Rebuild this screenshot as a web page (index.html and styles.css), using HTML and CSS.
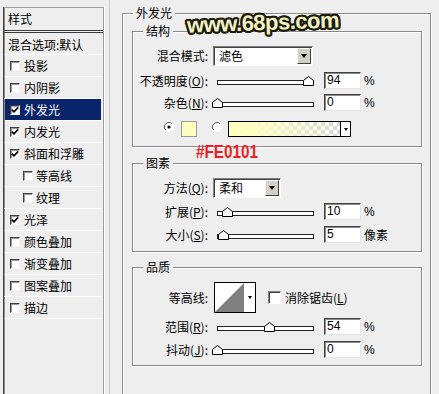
FILE: index.html
```html
<!DOCTYPE html>
<html lang="zh-CN">
<head>
<meta charset="utf-8">
<title>外发光</title>
<link rel="stylesheet" href="styles.css">
</head>
<body>
<div class="side">
  <div class="list">
    <div class="list-head">样式</div>
    <div class="list-blend">混合选项:默认</div>
    <div class="item"><span class="cb"></span><span>投影</span></div>
    <div class="item"><span class="cb"></span><span>内阴影</span></div>
    <div class="item sel"><span class="cb"><svg class="chk" viewBox="0 0 8 8" width="8" height="8"><path d="M0.8 3.6 L3 5.8 L7.2 1.4" fill="none" stroke="#000" stroke-width="1.7"/></svg></span><span>外发光</span></div>
    <div class="item"><span class="cb"><svg class="chk" viewBox="0 0 8 8" width="8" height="8"><path d="M0.8 3.6 L3 5.8 L7.2 1.4" fill="none" stroke="#000" stroke-width="1.7"/></svg></span><span>内发光</span></div>
    <div class="item"><span class="cb"><svg class="chk" viewBox="0 0 8 8" width="8" height="8"><path d="M0.8 3.6 L3 5.8 L7.2 1.4" fill="none" stroke="#000" stroke-width="1.7"/></svg></span><span>斜面和浮雕</span></div>
    <div class="item sub"><span class="cb"></span><span>等高线</span></div>
    <div class="item sub"><span class="cb"></span><span>纹理</span></div>
    <div class="item"><span class="cb"><svg class="chk" viewBox="0 0 8 8" width="8" height="8"><path d="M0.8 3.6 L3 5.8 L7.2 1.4" fill="none" stroke="#000" stroke-width="1.7"/></svg></span><span>光泽</span></div>
    <div class="item"><span class="cb"></span><span>颜色叠加</span></div>
    <div class="item"><span class="cb"></span><span>渐变叠加</span></div>
    <div class="item"><span class="cb"></span><span>图案叠加</span></div>
    <div class="item"><span class="cb"></span><span>描边</span></div>
  </div>
</div>

<div class="main">
  <fieldset class="group outer">
    <legend>外发光</legend>

    <fieldset class="group box box1">
      <legend>结构</legend>
      <div class="row r-select">
        <span class="lbl">混合模式:</span>
        <div class="select w100"><span>滤色</span><span class="sel-btn"><span class="tri"></span></span></div>
      </div>
      <div class="row r-num mt6">
        <span class="lbl">不透明度(<u>O</u>):</span>
        <div class="slider"><div class="track"></div><svg class="thumb" style="left:94%" viewBox="0 0 11 10" width="11" height="10"><path d="M0.5 9.5 V4.5 L5.5 0.5 L10.5 4.5 V9.5 Z" fill="#fff" stroke="#000"/></svg></div>
        <span class="num">94</span><span class="unit">%</span>
      </div>
      <div class="row r-num mt5">
        <span class="lbl">杂色(<u>N</u>):</span>
        <div class="slider"><div class="track"></div><svg class="thumb" style="left:0%" viewBox="0 0 11 10" width="11" height="10"><path d="M0.5 9.5 V4.5 L5.5 0.5 L10.5 4.5 V9.5 Z" fill="#fff" stroke="#000"/></svg></div>
        <span class="num">0</span><span class="unit">%</span>
      </div>
      <div class="row r-color mt10">
        <svg class="radio" viewBox="0 0 10 10" width="10" height="10"><circle cx="5" cy="5" r="4.5" fill="#fff"/><path d="M1.8 8.2 A4.5 4.5 0 0 1 8.2 1.8" fill="none" stroke="#555"/><path d="M8.2 1.8 A4.5 4.5 0 0 1 1.8 8.2" fill="none" stroke="#fff"/><circle cx="5" cy="5" r="1.6" fill="#000"/></svg>
        <span class="swatch"></span>
        <svg class="radio r2" viewBox="0 0 10 10" width="10" height="10"><circle cx="5" cy="5" r="4.5" fill="#fff"/><path d="M1.8 8.2 A4.5 4.5 0 0 1 8.2 1.8" fill="none" stroke="#555"/><path d="M8.2 1.8 A4.5 4.5 0 0 1 1.8 8.2" fill="none" stroke="#fff"/></svg>
        <div class="grad-pick"><span class="grad"></span><span class="grad-btn"><span class="tri small"></span></span></div>
      </div>
    </fieldset>

    <fieldset class="group box box2">
      <legend>图素</legend>
      <div class="row r-select">
        <span class="lbl">方法(<u>Q</u>):</span>
        <div class="select w68"><span>柔和</span><span class="sel-btn"><span class="tri"></span></span></div>
      </div>
      <div class="row r-num mt5">
        <span class="lbl">扩展(<u>P</u>):</span>
        <div class="slider"><div class="track"></div><svg class="thumb" style="left:10%" viewBox="0 0 11 10" width="11" height="10"><path d="M0.5 9.5 V4.5 L5.5 0.5 L10.5 4.5 V9.5 Z" fill="#fff" stroke="#000"/></svg></div>
        <span class="num">10</span><span class="unit">%</span>
      </div>
      <div class="row r-num mt6">
        <span class="lbl">大小(<u>S</u>):</span>
        <div class="slider"><div class="track"></div><svg class="thumb" style="left:6%" viewBox="0 0 11 10" width="11" height="10"><path d="M0.5 9.5 V4.5 L5.5 0.5 L10.5 4.5 V9.5 Z" fill="#fff" stroke="#000"/></svg></div>
        <span class="num">5</span><span class="unit cjk">像素</span>
      </div>
    </fieldset>

    <fieldset class="group box box3">
      <legend>品质</legend>
      <div class="row r-contour">
        <span class="lbl">等高线:</span>
        <div class="contour">
          <svg viewBox="0 0 29 29" width="29" height="29"><polygon points="0,29 29,0 29,29" fill="#808080"/></svg>
          <span class="contour-btn"><span class="tri small"></span></span>
        </div>
        <span class="cb13"></span><span class="cb-text">消除锯齿(<u>L</u>)</span>
      </div>
      <div class="row r-num mt5">
        <span class="lbl">范围(<u>R</u>):</span>
        <div class="slider"><div class="track"></div><svg class="thumb" style="left:54%" viewBox="0 0 11 10" width="11" height="10"><path d="M0.5 9.5 V4.5 L5.5 0.5 L10.5 4.5 V9.5 Z" fill="#fff" stroke="#000"/></svg></div>
        <span class="num">54</span><span class="unit">%</span>
      </div>
      <div class="row r-num mt6">
        <span class="lbl">抖动(<u>J</u>):</span>
        <div class="slider"><div class="track"></div><svg class="thumb" style="left:0%" viewBox="0 0 11 10" width="11" height="10"><path d="M0.5 9.5 V4.5 L5.5 0.5 L10.5 4.5 V9.5 Z" fill="#fff" stroke="#000"/></svg></div>
        <span class="num">0</span><span class="unit">%</span>
      </div>
    </fieldset>
  </fieldset>
</div>

<div class="wm">www.68ps.com</div>
<div class="tag">#FE0101</div>
</body>
</html>
```

FILE: styles.css
```css
* { box-sizing: border-box; }
html, body { margin: 0; padding: 0; }
body {
  width: 439px;
  height: 394px;
  overflow: hidden;
  position: relative;
  display: flex;
  background: #eeeeee;
  color: #000;
  font: 12px/14px "Noto Sans CJK SC", "Liberation Sans", sans-serif;
}

/* ---------- left style list ---------- */
.side {
  width: 110px;
  height: 394px;
  flex: none;
  padding: 7px 0 0 3px;
  border-right: 1px solid #c8c8c8;
  display: flex;
  flex-direction: column;
}
.list {
  width: 101px;
  flex: 1;
  border-top: 1px solid #a0a0a0;
  border-left: 1px solid #404040;
  border-right: 1px solid #9a9a9a;
  box-shadow: 1px 0 0 #fff, inset 1px 0 0 #8a8a8a;
}
.list-head {
  height: 25px;
  line-height: 22px;
  padding-left: 4px;
  border-bottom: 3px double #3a3a3a;
}
.list-blend {
  height: 22px;
  padding: 2px 0 0 4px;
  line-height: 19px;
  border-bottom: 1px solid #fbfbfb;
}
.item {
  height: 22px;
  display: flex;
  align-items: center;
  gap: 4px;
  padding-left: 6px;
  border-bottom: 1px solid #fbfbfb;
}
.item.sub { padding-left: 19px; gap: 3px; }
.item.sel {
  background: #0a246a;
  color: #fff;
  margin: 0 2px 0 1px;
  padding-left: 5px;
}
.cb {
  width: 10px;
  height: 10px;
  flex: none;
  position: relative;
  background: #fff;
  border: 1px solid;
  border-color: #404040 #f4f4f4 #f4f4f4 #404040;
  box-shadow: inset 1px 1px 0 #9a9a9a;
}
.chk { position: absolute; left: 0; top: 0; }

/* ---------- right settings ---------- */
.main {
  flex: 1;
  height: 394px;
  overflow: hidden;
  padding: 6px 8px 0 12px;
}
fieldset { margin: 0; min-width: 0; }
.group {
  border: 1px solid #8a8a8a;
  box-shadow: 1px 1px 0 #fff, inset 1px 1px 0 #fff;
}
.group > legend {
  padding: 0 3px;
  height: 14px;
  line-height: 14px;
  background: #eeeeee;
}
.outer { padding: 4px 8px 60px 9px; }
.outer > legend { margin-left: 1px; }
.box { padding: 8px 0 9px 0; }
.box > legend { margin-left: 10px; }
.box2 { margin-top: 9px; padding-bottom: 8px; }
.box3 { margin-top: 8px; padding-bottom: 7px; }

.row { display: flex; align-items: center; }
.r-select { height: 20px; }
.r-num { height: 17px; }
.r-color { height: 16px; padding-left: 31px; align-items: flex-start; }
.r-contour { height: 31px; }
.mt5 { margin-top: 5px; }
.mt6 { margin-top: 6px; }
.mt10 { margin-top: 10px; }

.lbl {
  width: 75px;
  flex: none;
  text-align: right;
  white-space: nowrap;
}
u { text-decoration: underline; text-underline-offset: 1px; }

.select {
  margin-left: 5px;
  height: 20px;
  display: flex;
  align-items: center;
  justify-content: space-between;
  padding: 0 1px 0 5px;
  background: #fff;
  border: 1px solid;
  border-color: #808080 #fff #fff #808080;
  box-shadow: inset 1px 1px 0 #404040;
}
.w100 { width: 100px; }
.w68 { width: 68px; }
.sel-btn {
  width: 14px;
  height: 16px;
  display: flex;
  align-items: center;
  justify-content: center;
  background: #d4d0c8;
  border: 1px solid;
  border-color: #fff #404040 #404040 #fff;
}
.tri {
  width: 0;
  height: 0;
  border-top: 4px solid #000;
  border-left: 3.5px solid transparent;
  border-right: 3.5px solid transparent;
}
.tri.small {
  border-top-width: 3px;
  border-left-width: 2.5px;
  border-right-width: 2.5px;
}

.slider {
  position: relative;
  width: 97px;
  height: 17px;
  flex: none;
  margin-left: 9px;
}
.track {
  margin-top: 8px;
  height: 5px;
  background: #fff;
  border: 1px solid #222;
}
.thumb {
  position: absolute;
  top: 4px;
  margin-left: -5px;
}
.num {
  width: 37px;
  height: 17px;
  flex: none;
  margin-left: 10px;
  padding-left: 2px;
  background: #fff;
  border: 1px solid;
  border-color: #404040 #e4e4e4 #e4e4e4 #404040;
  box-shadow: inset 1px 1px 0 #8a8a8a;
  font: 12px/15px "Liberation Sans", sans-serif;
}
.unit {
  margin-left: 3px;
  font: 12px/14px "Liberation Sans", sans-serif;
}
.unit.cjk { font-family: "Noto Sans CJK SC", sans-serif; }

.radio { flex: none; margin-top: 1px; }
.swatch {
  width: 16px;
  height: 16px;
  flex: none;
  margin-left: 7px;
  background: #ffffc0;
  border: 1px solid #9c9c9c;
}
.radio.r2 { margin-left: 15px; }
.grad-pick {
  width: 123px;
  height: 16px;
  margin-left: 6px;
  display: flex;
  border: 1px solid #000;
}
.grad {
  flex: 1;
  background:
    linear-gradient(to right, #ffffc0 0%, #ffffc0 12%, rgba(255,255,192,0) 100%),
    repeating-conic-gradient(#d8d8d8 0 25%, #ffffff 0 50%) 0 0 / 8px 8px;
}
.grad-btn {
  width: 10px;
  display: flex;
  align-items: center;
  justify-content: center;
  background: #fff;
  border-left: 1px solid #000;
}

.contour {
  margin-left: 6px;
  width: 42px;
  height: 31px;
  display: flex;
  background: #fff;
  border: 1px solid #000;
}
.contour svg { flex: none; }
.contour-btn {
  flex: 1;
  display: flex;
  align-items: center;
  justify-content: center;
}
.cb13 {
  width: 13px;
  height: 13px;
  flex: none;
  margin-left: 12px;
  background: #fff;
  border: 1px solid;
  border-color: #808080 #fff #fff #808080;
  box-shadow: inset 1px 1px 0 #404040;
}
.cb-text { margin-left: 4px; white-space: nowrap; }

/* ---------- overlays ---------- */
.wm {
  position: absolute;
  left: 187px;
  top: 12px;
  font: bold 22px/22px "Liberation Sans", sans-serif;
  letter-spacing: -0.5px;
  color: #f2f2c4;
  transform: rotate(-2deg);
  text-shadow:
    2px 0 0 #1c1a0c, -2px 0 0 #1c1a0c, 0 2px 0 #1c1a0c, 0 -2px 0 #1c1a0c,
    1.5px 1.5px 0 #1c1a0c, -1.5px 1.5px 0 #1c1a0c, 1.5px -1.5px 0 #1c1a0c, -1.5px -1.5px 0 #1c1a0c,
    2px 1px 0 #1c1a0c, -2px 1px 0 #1c1a0c, 2px -1px 0 #1c1a0c, -2px -1px 0 #1c1a0c,
    1px 2px 0 #1c1a0c, -1px 2px 0 #1c1a0c, 1px -2px 0 #1c1a0c, -1px -2px 0 #1c1a0c;
}
.tag {
  position: absolute;
  left: 196px;
  top: 143px;
  font: bold 18px/18px "Liberation Sans", sans-serif;
  color: #ee1c25;
  transform: scaleX(0.85);
  transform-origin: left top;
}
```
